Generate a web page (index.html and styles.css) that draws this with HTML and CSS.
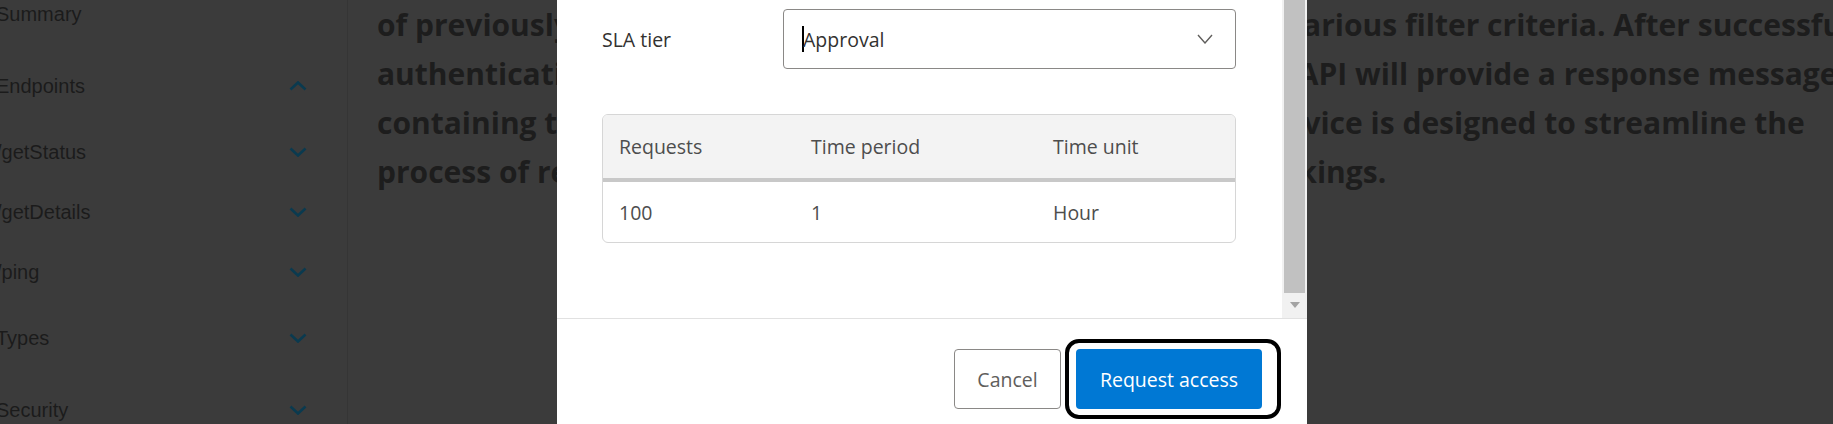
FILE: index.html
```html
<!DOCTYPE html>
<html lang="en">
<head>
    <meta charset="UTF-8">
    <meta name="viewport" content="width=device-width, initial-scale=1.0">
    <title>API details - Request access</title>
    <link rel="stylesheet" href="styles.css">
</head>
<body>
    <div class="page">
        <nav class="sidebar">
            <ul class="nav-list">
                <li class="nav-item nav-top">Summary</li>
                <li class="nav-item nav-top">Endpoints
                    <svg class="chev" width="18" height="10" viewBox="0 0 18 10"><polyline points="1.5,8.5 9,1.5 16.5,8.5"/></svg>
                </li>
                <li class="nav-item nav-child">/getStatus
                    <svg class="chev" width="18" height="10" viewBox="0 0 18 10"><polyline points="1.5,1.5 9,8.5 16.5,1.5"/></svg>
                </li>
                <li class="nav-item nav-child">/getDetails
                    <svg class="chev" width="18" height="10" viewBox="0 0 18 10"><polyline points="1.5,1.5 9,8.5 16.5,1.5"/></svg>
                </li>
                <li class="nav-item nav-child">/ping
                    <svg class="chev" width="18" height="10" viewBox="0 0 18 10"><polyline points="1.5,1.5 9,8.5 16.5,1.5"/></svg>
                </li>
                <li class="nav-item nav-top">Types
                    <svg class="chev" width="18" height="10" viewBox="0 0 18 10"><polyline points="1.5,1.5 9,8.5 16.5,1.5"/></svg>
                </li>
                <li class="nav-item nav-top">Security
                    <svg class="chev" width="18" height="10" viewBox="0 0 18 10"><polyline points="1.5,1.5 9,8.5 16.5,1.5"/></svg>
                </li>
            </ul>
        </nav>
        <main class="content">
            <p class="intro">of previously made bookings stored in the systems based on various filter criteria. After successful<br>
            authentication and validation of every incoming request, the API will provide a response message<br>
            containing the list of all the requested booking detail. This service is designed to streamline the<br>
            process of retrieving, filtering, and reviewing our existing bookings.</p>
        </main>
    </div>

    <!-- Request access dialog -->
    <div class="overlay">
        <div class="dialog">
            <div class="dialog-body">
                <div class="dialog-scroll">
                    <div class="field-row">
                        <label class="field-label">SLA tier</label>
                        <div class="select">
                            <span class="select-value"><span class="caret"></span>Approval</span>
                            <svg class="select-chev" width="16" height="10" viewBox="0 0 16 10"><polyline points="1,1 8,9 15,1"/></svg>
                        </div>
                    </div>
                    <div class="table-wrap">
                        <table class="sla-table">
                            <thead>
                                <tr>
                                    <th class="col-requests">Requests</th>
                                    <th class="col-period">Time period</th>
                                    <th class="col-unit">Time unit</th>
                                </tr>
                            </thead>
                            <tbody>
                                <tr>
                                    <td>100</td>
                                    <td>1</td>
                                    <td>Hour</td>
                                </tr>
                            </tbody>
                        </table>
                    </div>
                </div>
                <div class="scrollbar">
                    <div class="scroll-thumb"></div>
                    <div class="scroll-arrow"></div>
                </div>
            </div>
            <div class="dialog-footer">
                <button class="btn btn-secondary">Cancel</button>
                <span class="focus-ring">
                    <button class="btn btn-primary">Request access</button>
                </span>
            </div>
        </div>
    </div>
</body>
</html>
```

FILE: styles.css
```css
html, body {
    height: 100%;
}
body {
    margin: 0;
    background: #3b3b3b;
    overflow: hidden;
    font-family: "Open Sans", "Noto Sans", sans-serif;
}
.page {
    display: flex;
    height: 100%;
}
.sidebar {
    width: 347px;
    flex-shrink: 0;
    border-right: 1px solid #353535;
    overflow: hidden;
}
.nav-list {
    list-style: none;
    margin: -22px 0 0 -4px;
    padding: 0;
}
.nav-item {
    display: flex;
    justify-content: space-between;
    align-items: center;
    padding-right: 40px;
    font-family: "Liberation Sans", Arial, sans-serif;
    font-size: 20px;
    color: #1b1b1b;
}
.nav-top {
    height: 72px;
}
.nav-child {
    height: 60px;
}
.chev polyline {
    fill: none;
    stroke: #0a3a4f;
    stroke-width: 2.6;
}
.content {
    flex: 1;
    padding-left: 29px;
    overflow: hidden;
}
.intro {
    margin: 0;
    font-size: 30px;
    font-weight: 700;
    line-height: 49px;
    color: #1d1d1d;
    white-space: nowrap;
}

/* dialog */
.overlay {
    position: fixed;
    top: 0;
    left: 0;
    width: 100%;
    height: 100%;
    display: flex;
    align-items: flex-start;
    padding-left: 557px;
}
.dialog {
    width: 750px;
    background: #fff;
    color: #323130;
    font-size: 19.5px;
}
.dialog-body {
    display: flex;
    height: 318px;
    overflow: hidden;
}
.dialog-scroll {
    flex: 1;
    padding: 9px 46px 0 45px;
}
.field-row {
    display: flex;
    align-items: center;
}
.field-label {
    width: 181px;
    flex-shrink: 0;
}
.select {
    flex: 1;
    height: 60px;
    box-sizing: border-box;
    border: 1px solid #8a8886;
    border-radius: 4px;
    display: flex;
    align-items: center;
    justify-content: space-between;
    padding: 0 22px 0 18px;
}
.select-value {
    display: flex;
    align-items: center;
}
.caret {
    width: 2px;
    height: 26px;
    background: #000;
    margin-right: -1px;
}
.select-chev polyline {
    fill: none;
    stroke: #605e5c;
    stroke-width: 1.4;
}
.table-wrap {
    margin-top: 45px;
    border: 1px solid #d6d6d6;
    border-radius: 6px;
    overflow: hidden;
}
.sla-table {
    width: 100%;
    border-collapse: collapse;
}
.sla-table th,
.sla-table td {
    text-align: left;
    font-weight: 400;
    padding: 0 16px;
    color: #4d4d4d;
}
.sla-table th {
    height: 63px;
    background: #f3f3f3;
    border-bottom: 4px solid #c8c8c8;
}
.sla-table td {
    height: 60px;
}
.col-requests {
    width: 160px;
}
.col-period {
    width: 210px;
}
.scrollbar {
    width: 25px;
    flex-shrink: 0;
    background: #f1f1f1;
    display: flex;
    flex-direction: column;
    align-items: center;
}
.scroll-thumb {
    width: 21px;
    height: 293px;
    background: #c1c1c1;
}
.scroll-arrow {
    margin-top: 9px;
    width: 0;
    height: 0;
    border-left: 5px solid transparent;
    border-right: 5px solid transparent;
    border-top: 6px solid #a3a3a3;
}
.dialog-footer {
    border-top: 1px solid #e1e1e1;
    display: flex;
    justify-content: flex-end;
    align-items: center;
    gap: 4px;
    padding: 20px 26px 20px 0;
}
.btn {
    height: 60px;
    border-radius: 4px;
    font-family: inherit;
    font-size: 19.5px;
    cursor: pointer;
}
.btn-secondary {
    width: 107px;
    background: #fff;
    border: 1px solid #8a8886;
    color: #605e5c;
}
.btn-primary {
    width: 186px;
    background: #0078d4;
    border: none;
    color: #fff;
}
.focus-ring {
    display: inline-flex;
    border: 4px solid #000;
    border-radius: 14px;
    padding: 6px 15px 6px 7px;
}
```
